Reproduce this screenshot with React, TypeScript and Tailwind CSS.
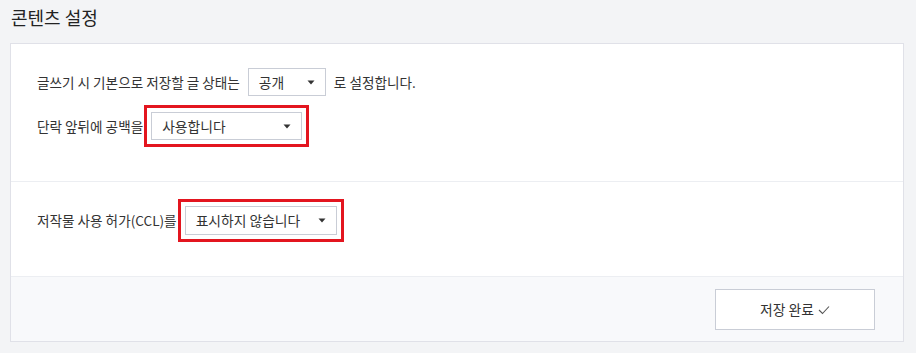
import React from "react";

function Caret() {
  return (
    <svg width="8" height="5" viewBox="0 0 8 5" className="shrink-0">
      <path d="M0.5 0.5 H7.5 L4 4.5 Z" fill="#333" />
    </svg>
  );
}

function Select({ value, w, h }: { value: string; w: string; h: string }) {
  return (
    <div
      className={`flex items-center justify-between border border-[#c9cdd6] bg-white pl-[10px] pr-[10px] text-[13.8px] text-[#333] ${w} ${h}`}
    >
      <span>{value}</span>
      <Caret />
    </div>
  );
}

export default function App() {
  return (
    <div
      className="w-[916px] h-[353px] bg-[#f3f4f6] text-[#333]"
      style={{ fontFamily: '"Noto Sans CJK KR", "Noto Sans", sans-serif' }}
    >
      <div className="h-[43px] pl-[11px] pt-[4px] text-[18px] leading-[26px] text-[#222]">콘텐츠 설정</div>
      <div className="ml-[10px] w-[894px] border border-[#e0e1e8] bg-white">
        <div className="h-[137px] px-[26px] pt-[24px]">
          <div className="flex items-center gap-[8px] text-[13.6px]">
            <span>글쓰기 시 기본으로 저장할 글 상태는</span>
            <Select value="공개" w="w-[78px]" h="h-[28px]" />
            <span>로 설정합니다.</span>
          </div>
          <div className="mt-[9px] flex items-center text-[13.6px]">
            <span>단락 앞뒤에 공백을</span>
            <div className="ml-[1px] border-[3px] border-[#e3151f] p-[4px]">
              <Select value="사용합니다" w="w-[151px]" h="h-[28px]" />
            </div>
          </div>
        </div>
        <div className="h-[95px] border-t border-[#eceef2] px-[26px] pt-[17px]">
          <div className="flex items-center text-[13.6px]">
            <span>저작물 사용 허가(CCL)를</span>
            <div className="ml-[1px] border-[3px] border-[#e3151f] p-[4px]">
              <Select value="표시하지 않습니다" w="w-[152px]" h="h-[29px]" />
            </div>
          </div>
        </div>
        <div className="flex h-[65px] justify-end border-t border-[#eceef2] bg-[#f8f9fb] pr-[28px] pt-[12px]">
          <button className="flex h-[41px] w-[160px] items-center justify-center gap-[4px] border border-[#c9cdd6] bg-white text-[13.8px] text-[#333]">
            <span>저장 완료</span>
            <svg width="12" height="10" viewBox="0 0 12 10">
              <path d="M1 5 L4.5 8.5 L11 1.5" fill="none" stroke="#555" strokeWidth="1.1" />
            </svg>
          </button>
        </div>
      </div>
    </div>
  );
}
